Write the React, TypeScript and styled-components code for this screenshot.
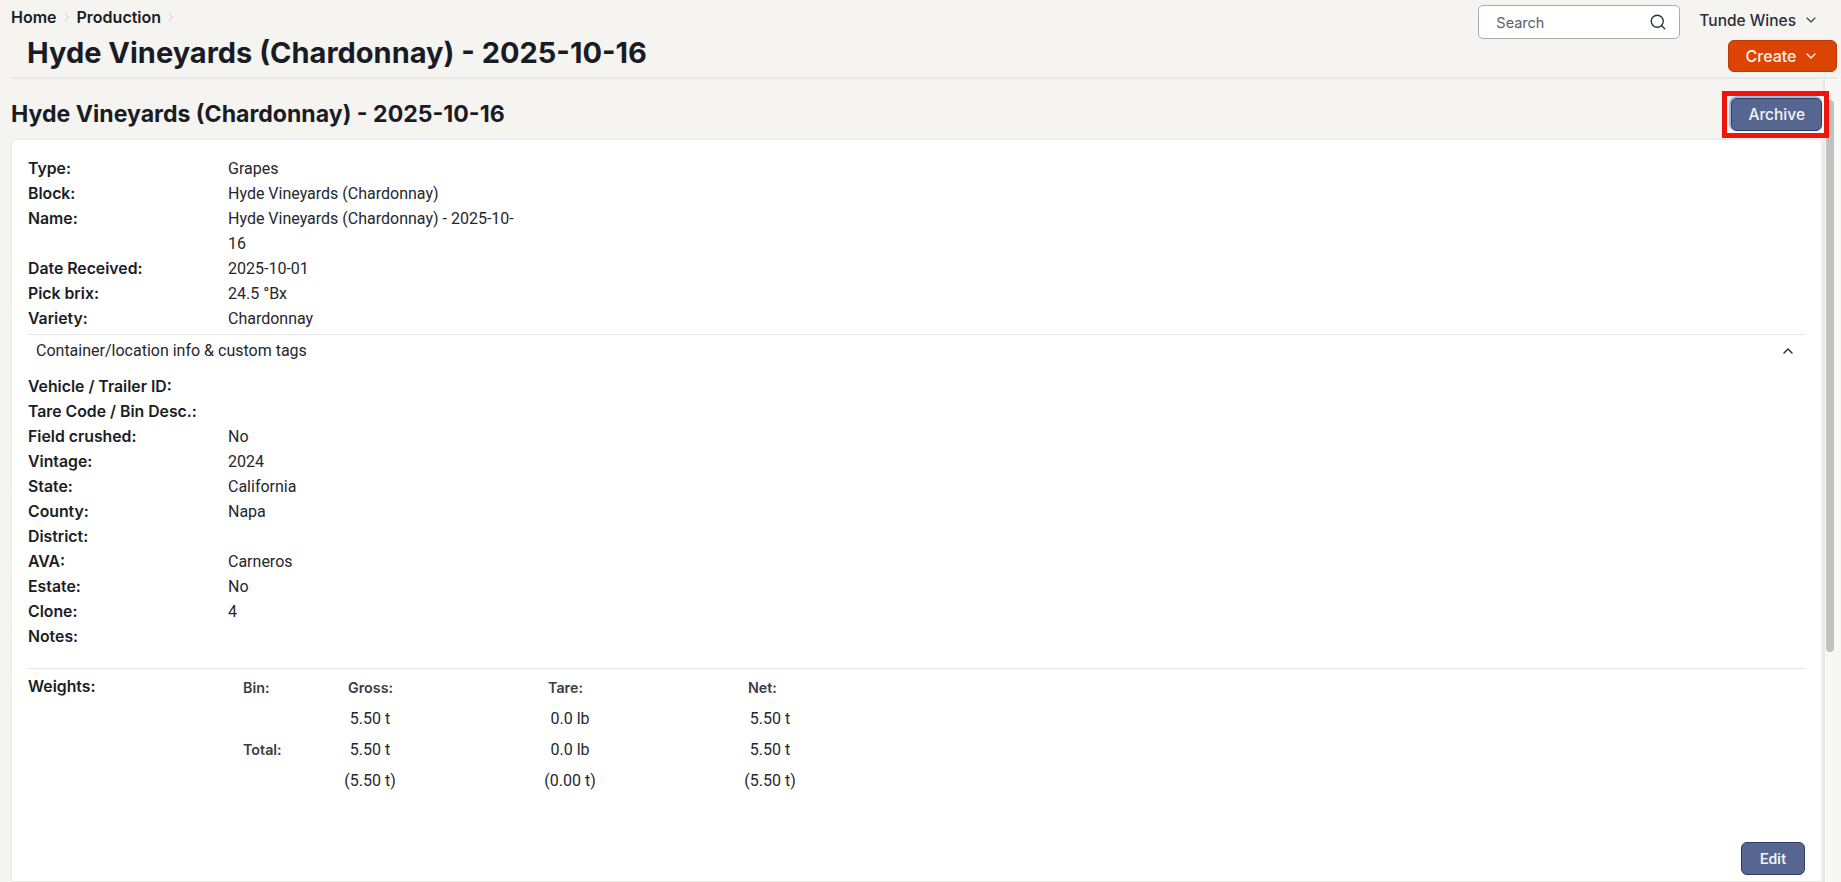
import React from 'react'
import styled, { createGlobalStyle } from 'styled-components'
import { ChevronDown, ChevronRight, ChevronUp, Search } from 'lucide-react'

const GlobalStyle = createGlobalStyle`
    html, body {
        margin: 0;
        height: 100%;
        overflow: hidden;
        background-color: #f5f4f0;
    }
    * {
        box-sizing: border-box;
    }
`

const Page = styled.div`
    width: 1841px;
    height: 882px;
    overflow: hidden;
    display: flex;
    flex-direction: column;
    font-family: Inter, "Liberation Sans", sans-serif;
    color: #1b1d24;
`

const Header = styled.header`
    display: flex;
    justify-content: space-between;
    height: 79px;
    margin-left: 11px;
    margin-right: 4px;
    border-bottom: 2px solid #e8e8e4;
`

const HeaderLeft = styled.div`
    display: flex;
    flex-direction: column;
`

const Breadcrumbs = styled.nav`
    display: flex;
    align-items: center;
    height: 19px;
    margin-top: 7px;
    font-size: 16px;
    font-weight: 600;
    svg {
        color: #c4c4c0;
        margin: 0 3px;
    }
`

const PageTitle = styled.h1`
    margin: 8px 0 0 16px;
    font-size: 29px;
    line-height: 38px;
    font-weight: 700;
    color: #1a1c25;
`

const HeaderRight = styled.div`
    display: flex;
    flex-direction: column;
    align-items: flex-end;
    padding-top: 5px;
`

const TopRow = styled.div`
    display: flex;
    align-items: center;
    gap: 19px;
    margin-right: 18px;
`

const SearchBox = styled.div`
    width: 202px;
    height: 34px;
    display: flex;
    align-items: center;
    justify-content: space-between;
    padding: 0 12px 0 17px;
    background-color: #fff;
    border: 1px solid #a9abb0;
    border-radius: 5px;
    font-size: 14.5px;
    color: #5c606a;
    svg {
        color: #2c3038;
    }
`

const AccountMenu = styled.div`
    display: flex;
    align-items: center;
    gap: 7px;
    font-size: 15.5px;
    font-weight: 500;
    color: #2a2e38;
    margin-bottom: 4px;
    svg {
        color: #3a3e48;
    }
`

const CreateButton = styled.button`
    display: flex;
    align-items: center;
    justify-content: center;
    gap: 7px;
    width: 109px;
    height: 32px;
    margin-top: 1px;
    background-color: #dc4405;
    border: 1px solid #b83a06;
    border-radius: 6px;
    color: #fdf1ea;
    font-family: inherit;
    font-size: 16px;
    font-weight: 500;
`

const Body = styled.main`
    flex: 1;
    display: flex;
    min-height: 0;
`

const Content = styled.div`
    flex: 1;
    min-width: 0;
    padding-left: 11px;
    display: flex;
    flex-direction: column;
`

const SectionHeader = styled.div`
    display: flex;
    align-items: center;
    justify-content: space-between;
    height: 60px;
    padding-top: 10px;
`

const SectionTitle = styled.h2`
    margin: 0;
    font-size: 23.1px;
    font-weight: 700;
    color: #1a1c25;
`

const Highlight = styled.div`
    position: relative;
    z-index: 1;
    display: flex;
    padding: 2px 2px 2px 4px;
    margin-right: -7px;
    border: 5px solid #f0140c;
    background-color: #f2f5f9;
`

const ActionButton = styled.button<{ $focused?: boolean }>`
    min-width: 64px;
    height: 33px;
    padding: 0 16px;
    background-color: #566690;
    border: 1px solid #2d3d66;
    border-radius: 6px;
    color: #f1f3f8;
    font-family: inherit;
    font-size: 15.5px;
    font-weight: 500;
    box-shadow: ${(p) => (p.$focused ? '-1px -1px 0 1px #9dbfe0' : 'none')};
`

const Card = styled.section`
    flex: 1;
    background-color: #fff;
    border: 1px solid #e9e9e6;
    border-radius: 6px 6px 0 0;
    padding: 16px 16px 0;
    display: flex;
    flex-direction: column;
    font-family: Roboto, "Liberation Sans", sans-serif;
    font-size: 16px;
    line-height: 25px;
`

const Details = styled.dl`
    display: grid;
    grid-template-columns: 200px 288px;
    margin: 0;
`

const Label = styled.dt`
    font-family: Inter, "Liberation Sans", sans-serif;
    font-size: 15.8px;
    font-weight: 600;
    color: #1b1d24;
`

const Value = styled.dd`
    margin: 0;
    color: #25272e;
`

const Collapse = styled.div`
    display: flex;
    align-items: center;
    justify-content: space-between;
    height: 32px;
    margin-top: 3px;
    margin-bottom: 8px;
    padding: 0 9px 0 8px;
    border-top: 1px solid #e6e7e8;
    color: #25272e;
`

const Weights = styled.div`
    display: grid;
    grid-template-columns: 215px 1fr;
    margin-top: 19px;
    padding-top: 5px;
    border-top: 1px solid #e3e4e4;
`

const WeightTable = styled.div`
    display: grid;
    grid-template-columns: 105px repeat(3, 200px);
    grid-auto-rows: 31px;
    align-items: center;
    margin-top: -2px;
`

const ColumnHead = styled.div`
    font-family: Inter, "Liberation Sans", sans-serif;
    font-size: 14.3px;
    font-weight: 600;
    color: #3a3d46;
`

const WeightCell = styled.div`
    display: flex;
    justify-content: center;
    width: 44px;
    white-space: nowrap;
    color: #25272e;
`

const CardFooter = styled.div`
    display: flex;
    justify-content: flex-end;
    margin-top: auto;
    padding-bottom: 6px;
`

const Scrollbar = styled.div`
    width: 18px;
    margin-left: 1px;
    padding: 21px 0 0 1px;
    border-left: 2px solid #e6e6e3;
    background-color: #f7f7f5;
`

const ScrollThumb = styled.div`
    width: 8px;
    height: 552px;
    border-radius: 4px;
    background-color: #c1c1c1;
`

const topDetails = [
    ['Type:', 'Grapes'],
    ['Block:', 'Hyde Vineyards (Chardonnay)'],
    ['Name:', 'Hyde Vineyards (Chardonnay) - 2025-10-16'],
    ['Date Received:', '2025-10-01'],
    ['Pick brix:', '24.5 °Bx'],
    ['Variety:', 'Chardonnay'],
]

const moreDetails = [
    ['Vehicle / Trailer ID:', ''],
    ['Tare Code / Bin Desc.:', ''],
    ['Field crushed:', 'No'],
    ['Vintage:', '2024'],
    ['State:', 'California'],
    ['County:', 'Napa'],
    ['District:', ''],
    ['AVA:', 'Carneros'],
    ['Estate:', 'No'],
    ['Clone:', '4'],
    ['Notes:', ''],
]

const weightRows = [
    ['', '5.50 t', '0.0 lb', '5.50 t'],
    ['Total:', '5.50 t', '0.0 lb', '5.50 t'],
    ['', '(5.50 t)', '(0.00 t)', '(5.50 t)'],
]

const DetailList = ({ rows }: { rows: string[][] }) => (
    <Details>
        {rows.map(([label, value]) => (
            <React.Fragment key={label}>
                <Label>{label}</Label>
                <Value>{value}</Value>
            </React.Fragment>
        ))}
    </Details>
)

const App: React.FC = () => {
    return (
        <Page>
            <GlobalStyle />
            <Header>
                <HeaderLeft>
                    <Breadcrumbs>
                        Home <ChevronRight size={14} strokeWidth={1.5} /> Production <ChevronRight size={14} strokeWidth={1.5} />
                    </Breadcrumbs>
                    <PageTitle>Hyde Vineyards (Chardonnay) - 2025-10-16</PageTitle>
                </HeaderLeft>
                <HeaderRight>
                    <TopRow>
                        <SearchBox>
                            Search
                            <Search size={18} strokeWidth={1.75} />
                        </SearchBox>
                        <AccountMenu>
                            Tunde Wines
                            <ChevronDown size={16} strokeWidth={1.75} />
                        </AccountMenu>
                    </TopRow>
                    <CreateButton>
                        Create
                        <ChevronDown size={16} strokeWidth={2} />
                    </CreateButton>
                </HeaderRight>
            </Header>
            <Body>
                <Content>
                    <SectionHeader>
                        <SectionTitle>Hyde Vineyards (Chardonnay) - 2025-10-16</SectionTitle>
                        <Highlight>
                            <ActionButton $focused>Archive</ActionButton>
                        </Highlight>
                    </SectionHeader>
                    <Card>
                        <DetailList rows={topDetails} />
                        <Collapse>
                            Container/location info &amp; custom tags
                            <ChevronUp size={16} strokeWidth={2} />
                        </Collapse>
                        <DetailList rows={moreDetails} />
                        <Weights>
                            <Label>Weights:</Label>
                            <WeightTable>
                                <ColumnHead>Bin:</ColumnHead>
                                <ColumnHead>Gross:</ColumnHead>
                                <ColumnHead>Tare:</ColumnHead>
                                <ColumnHead>Net:</ColumnHead>
                                {weightRows.map((row, index) => (
                                    <React.Fragment key={index}>
                                        <ColumnHead>{row[0]}</ColumnHead>
                                        <WeightCell>{row[1]}</WeightCell>
                                        <WeightCell>{row[2]}</WeightCell>
                                        <WeightCell>{row[3]}</WeightCell>
                                    </React.Fragment>
                                ))}
                            </WeightTable>
                        </Weights>
                        <CardFooter>
                            <ActionButton>Edit</ActionButton>
                        </CardFooter>
                    </Card>
                </Content>
                <Scrollbar>
                    <ScrollThumb />
                </Scrollbar>
            </Body>
        </Page>
    )
}

export default App
